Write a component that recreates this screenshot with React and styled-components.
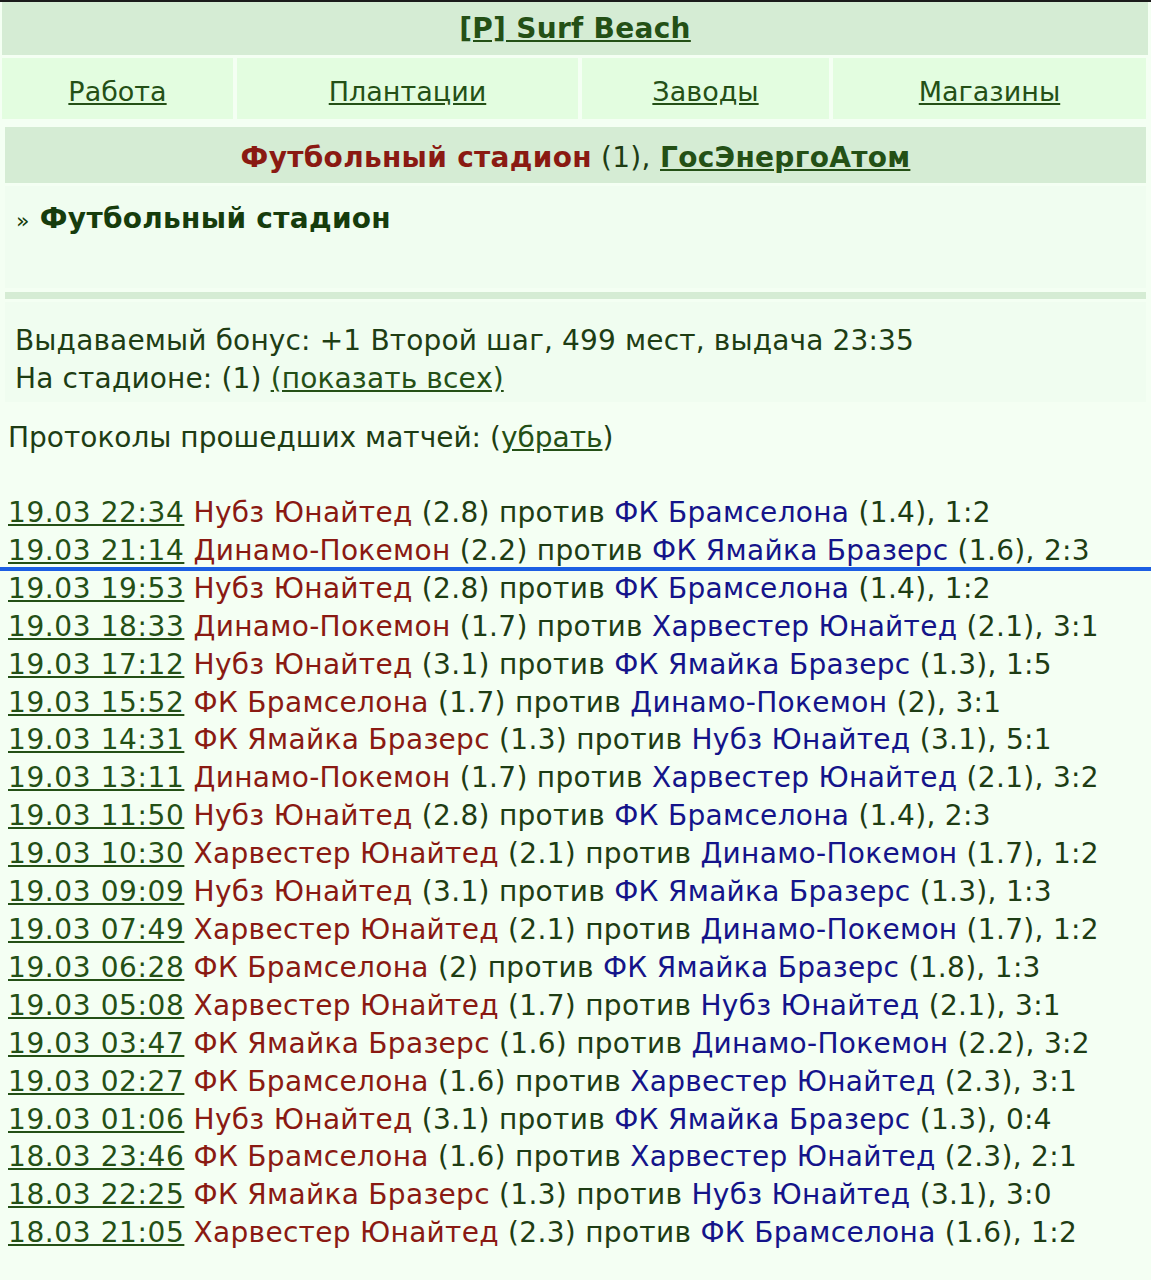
import React from 'react';
import styled, { createGlobalStyle } from 'styled-components';

const GlobalStyle = createGlobalStyle`
    body {
        margin: 0;
        background: #f4fff3;
        font-family: 'DejaVu Sans', Verdana, sans-serif;
        color: #1e3d14;
    }
`;

const Page = styled.div`
    border-top: 2px solid #1b1b1b;
    font-size: 28px;
    letter-spacing: 0.3px;
`;

const TitleBar = styled.div`
    margin: 0 3px 0 2px;
    height: 53px;
    background: #d5ecd4;
    display: flex;
    align-items: center;
    justify-content: center;
    font-weight: bold;
`;

const Link = styled.a`
    color: #245016;
    text-decoration: underline;
    font-weight: ${p => (p.$bold ? 'bold' : 'normal')};
`;

const Nav = styled.div`
    display: grid;
    grid-template-columns: 231px 341px 247px 1fr;
    gap: 4px;
    margin: 3px 5px 0 2px;
    font-size: 27px;
    letter-spacing: 0;
`;

const NavCell = styled.div`
    height: 61px;
    box-sizing: border-box;
    padding-top: 6px;
    background: #e3fde0;
    display: flex;
    align-items: center;
    justify-content: center;
`;

const Section = styled.div`
    margin: 8px 5px 0 5px;
`;

const SectionHead = styled.div`
    height: 56px;
    box-sizing: border-box;
    padding-top: 5px;
    background: #d5ecd4;
    display: flex;
    align-items: center;
    justify-content: center;
`;

const Title = styled.span`
    color: #8a1a12;
    font-weight: bold;
`;

const Panel = styled.div`
    background: #f0fdf0;
    margin-top: 3px;
    padding: ${p => p.$pad || '0'};
    height: ${p => p.$h}px;
    box-sizing: border-box;
    line-height: 38px;
    letter-spacing: 0.15px;
`;

const Crumb = styled.div`
    font-weight: bold;
    color: #163c0c;
    letter-spacing: 0.3px;
    & > span {
        font-weight: normal;
        font-size: 22px;
        margin-right: 10px;
    }
`;

const Divider = styled.div`
    height: 7px;
    background: #d5ecd4;
    margin-top: 4px;
`;

const Protocols = styled.div`
    padding: 17px 8px 0;
    line-height: 38px;
    letter-spacing: 0;
`;

const Matches = styled.div`
    margin-top: 37px;
    padding: 0 8px;
    line-height: 37.9px;
`;

const Row = styled.div`
    position: relative;
    white-space: nowrap;
    ${p =>
        p.$marked &&
        `&::after {
            content: '';
            position: absolute;
            left: -8px;
            width: 1151px;
            bottom: -1px;
            height: 4px;
            background: #1c5fe3;
        }`}
`;

const Time = styled(Link)`
    letter-spacing: 0.6px;
`;

const Home = styled.span`
    color: #8a1a12;
`;

const Away = styled.span`
    color: #14148a;
`;

const matches = [
    ['19.03 22:34', 'Нубз Юнайтед', '2.8', 'ФК Брамселона', '1.4', '1:2'],
    ['19.03 21:14', 'Динамо-Покемон', '2.2', 'ФК Ямайка Бразерс', '1.6', '2:3'],
    ['19.03 19:53', 'Нубз Юнайтед', '2.8', 'ФК Брамселона', '1.4', '1:2'],
    ['19.03 18:33', 'Динамо-Покемон', '1.7', 'Харвестер Юнайтед', '2.1', '3:1'],
    ['19.03 17:12', 'Нубз Юнайтед', '3.1', 'ФК Ямайка Бразерс', '1.3', '1:5'],
    ['19.03 15:52', 'ФК Брамселона', '1.7', 'Динамо-Покемон', '2', '3:1'],
    ['19.03 14:31', 'ФК Ямайка Бразерс', '1.3', 'Нубз Юнайтед', '3.1', '5:1'],
    ['19.03 13:11', 'Динамо-Покемон', '1.7', 'Харвестер Юнайтед', '2.1', '3:2'],
    ['19.03 11:50', 'Нубз Юнайтед', '2.8', 'ФК Брамселона', '1.4', '2:3'],
    ['19.03 10:30', 'Харвестер Юнайтед', '2.1', 'Динамо-Покемон', '1.7', '1:2'],
    ['19.03 09:09', 'Нубз Юнайтед', '3.1', 'ФК Ямайка Бразерс', '1.3', '1:3'],
    ['19.03 07:49', 'Харвестер Юнайтед', '2.1', 'Динамо-Покемон', '1.7', '1:2'],
    ['19.03 06:28', 'ФК Брамселона', '2', 'ФК Ямайка Бразерс', '1.8', '1:3'],
    ['19.03 05:08', 'Харвестер Юнайтед', '1.7', 'Нубз Юнайтед', '2.1', '3:1'],
    ['19.03 03:47', 'ФК Ямайка Бразерс', '1.6', 'Динамо-Покемон', '2.2', '3:2'],
    ['19.03 02:27', 'ФК Брамселона', '1.6', 'Харвестер Юнайтед', '2.3', '3:1'],
    ['19.03 01:06', 'Нубз Юнайтед', '3.1', 'ФК Ямайка Бразерс', '1.3', '0:4'],
    ['18.03 23:46', 'ФК Брамселона', '1.6', 'Харвестер Юнайтед', '2.3', '2:1'],
    ['18.03 22:25', 'ФК Ямайка Бразерс', '1.3', 'Нубз Юнайтед', '3.1', '3:0'],
    ['18.03 21:05', 'Харвестер Юнайтед', '2.3', 'ФК Брамселона', '1.6', '1:2'],
];

const nav = ['Работа', 'Плантации', 'Заводы', 'Магазины'];

export default function App() {
    return (
        <Page>
            <GlobalStyle />
            <TitleBar>
                <Link href="#" $bold>[P] Surf Beach</Link>
            </TitleBar>

            <Nav>
                {nav.map(item => (
                    <NavCell key={item}>
                        <Link href="#">{item}</Link>
                    </NavCell>
                ))}
            </Nav>

            <Section>
                <SectionHead>
                    <span>
                        <Title>Футбольный стадион</Title> (1),{' '}
                        <Link href="#" $bold>ГосЭнергоАтом</Link>
                    </span>
                </SectionHead>
                <Panel $h={102} $pad="14px 11px 0">
                    <Crumb>
                        <span>»</span>Футбольный стадион
                    </Crumb>
                </Panel>
                <Divider />
                <Panel $h={100} $pad="20px 10px 0">
                    <div>Выдаваемый бонус: +1 Второй шаг, 499 мест, выдача 23:35</div>
                    <div>
                        На стадионе: (1) <Link href="#">(показать всех)</Link>
                    </div>
                </Panel>
            </Section>

            <Protocols>
                Протоколы прошедших матчей: (<Link href="#">убрать</Link>)
            </Protocols>

            <Matches>
                {matches.map(([time, home, hr, away, ar, score], i) => (
                    <Row key={time} $marked={i === 1}>
                        <Time href="#">{time}</Time> <Home>{home}</Home> ({hr}) против{' '}
                        <Away>{away}</Away> ({ar}), {score}
                    </Row>
                ))}
            </Matches>
        </Page>
    );
}
